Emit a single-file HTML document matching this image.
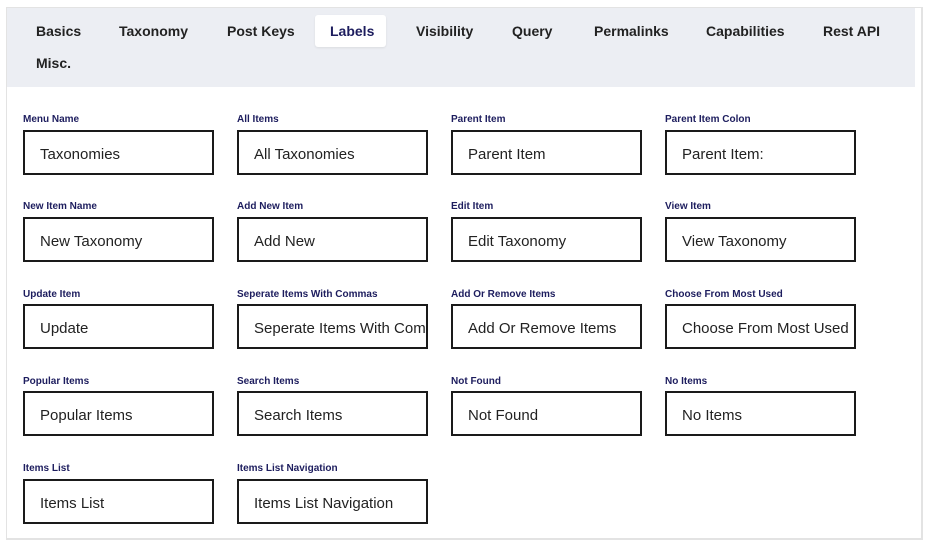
<!DOCTYPE html>
<html><head><style>
body{margin:0;background:#fff;width:930px;height:547px;position:relative;font-family:"Liberation Sans",sans-serif;overflow:hidden}
.panel{position:absolute;left:6px;top:7px;width:917px;height:533px;border:1px solid #e3e3e3;border-right-width:2px;border-bottom-width:2px;box-sizing:border-box}
.bar{position:absolute;left:7px;top:8px;width:908px;height:79px;background:#eceef3}
.tab{position:absolute;font-size:14px;font-weight:bold;color:#222;transform:translateY(-50%)}
.active{position:absolute;left:315px;top:15px;width:71px;height:32px;background:#fff;border-radius:3px;box-shadow:0 1px 2px rgba(0,0,0,.08)}
.lbl{position:absolute;font-size:10px;font-weight:bold;color:#1d1d5e}
.box{position:absolute;width:191px;height:45px;border:2px solid #1a1a1a;box-sizing:border-box;font-size:15px;color:#222;padding-left:15px;line-height:45px;white-space:nowrap;overflow:hidden}
</style></head><body>
<div class="panel"></div>
<div class="bar"></div>
<div class="active"></div>
<div class="tab" style="left:36px;top:31px">Basics</div>
<div class="tab" style="left:119px;top:31px">Taxonomy</div>
<div class="tab" style="left:227px;top:31px">Post Keys</div>
<div class="tab" style="left:330px;top:31px;color:#1d1d5e">Labels</div>
<div class="tab" style="left:416px;top:31px">Visibility</div>
<div class="tab" style="left:512px;top:31px">Query</div>
<div class="tab" style="left:594px;top:31px">Permalinks</div>
<div class="tab" style="left:706px;top:31px">Capabilities</div>
<div class="tab" style="left:823px;top:31px">Rest API</div>
<div class="tab" style="left:36px;top:63px">Misc.</div>

<div class="lbl" style="left:23px;top:114px">Menu Name</div><div class="box" style="left:23px;top:130px">Taxonomies</div>
<div class="lbl" style="left:237px;top:114px">All Items</div><div class="box" style="left:237px;top:130px">All Taxonomies</div>
<div class="lbl" style="left:451px;top:114px">Parent Item</div><div class="box" style="left:451px;top:130px">Parent Item</div>
<div class="lbl" style="left:665px;top:114px">Parent Item Colon</div><div class="box" style="left:665px;top:130px">Parent Item:</div>

<div class="lbl" style="left:23px;top:201px">New Item Name</div><div class="box" style="left:23px;top:217px">New Taxonomy</div>
<div class="lbl" style="left:237px;top:201px">Add New Item</div><div class="box" style="left:237px;top:217px">Add New</div>
<div class="lbl" style="left:451px;top:201px">Edit Item</div><div class="box" style="left:451px;top:217px">Edit Taxonomy</div>
<div class="lbl" style="left:665px;top:201px">View Item</div><div class="box" style="left:665px;top:217px">View Taxonomy</div>

<div class="lbl" style="left:23px;top:289px">Update Item</div><div class="box" style="left:23px;top:304px">Update</div>
<div class="lbl" style="left:237px;top:289px">Seperate Items With Commas</div><div class="box" style="left:237px;top:304px">Seperate Items With Commas</div>
<div class="lbl" style="left:451px;top:289px">Add Or Remove Items</div><div class="box" style="left:451px;top:304px">Add Or Remove Items</div>
<div class="lbl" style="left:665px;top:289px">Choose From Most Used</div><div class="box" style="left:665px;top:304px">Choose From Most Used</div>

<div class="lbl" style="left:23px;top:376px">Popular Items</div><div class="box" style="left:23px;top:391px">Popular Items</div>
<div class="lbl" style="left:237px;top:376px">Search Items</div><div class="box" style="left:237px;top:391px">Search Items</div>
<div class="lbl" style="left:451px;top:376px">Not Found</div><div class="box" style="left:451px;top:391px">Not Found</div>
<div class="lbl" style="left:665px;top:376px">No Items</div><div class="box" style="left:665px;top:391px">No Items</div>

<div class="lbl" style="left:23px;top:463px">Items List</div><div class="box" style="left:23px;top:479px">Items List</div>
<div class="lbl" style="left:237px;top:463px">Items List Navigation</div><div class="box" style="left:237px;top:479px">Items List Navigation</div>
</body></html>
